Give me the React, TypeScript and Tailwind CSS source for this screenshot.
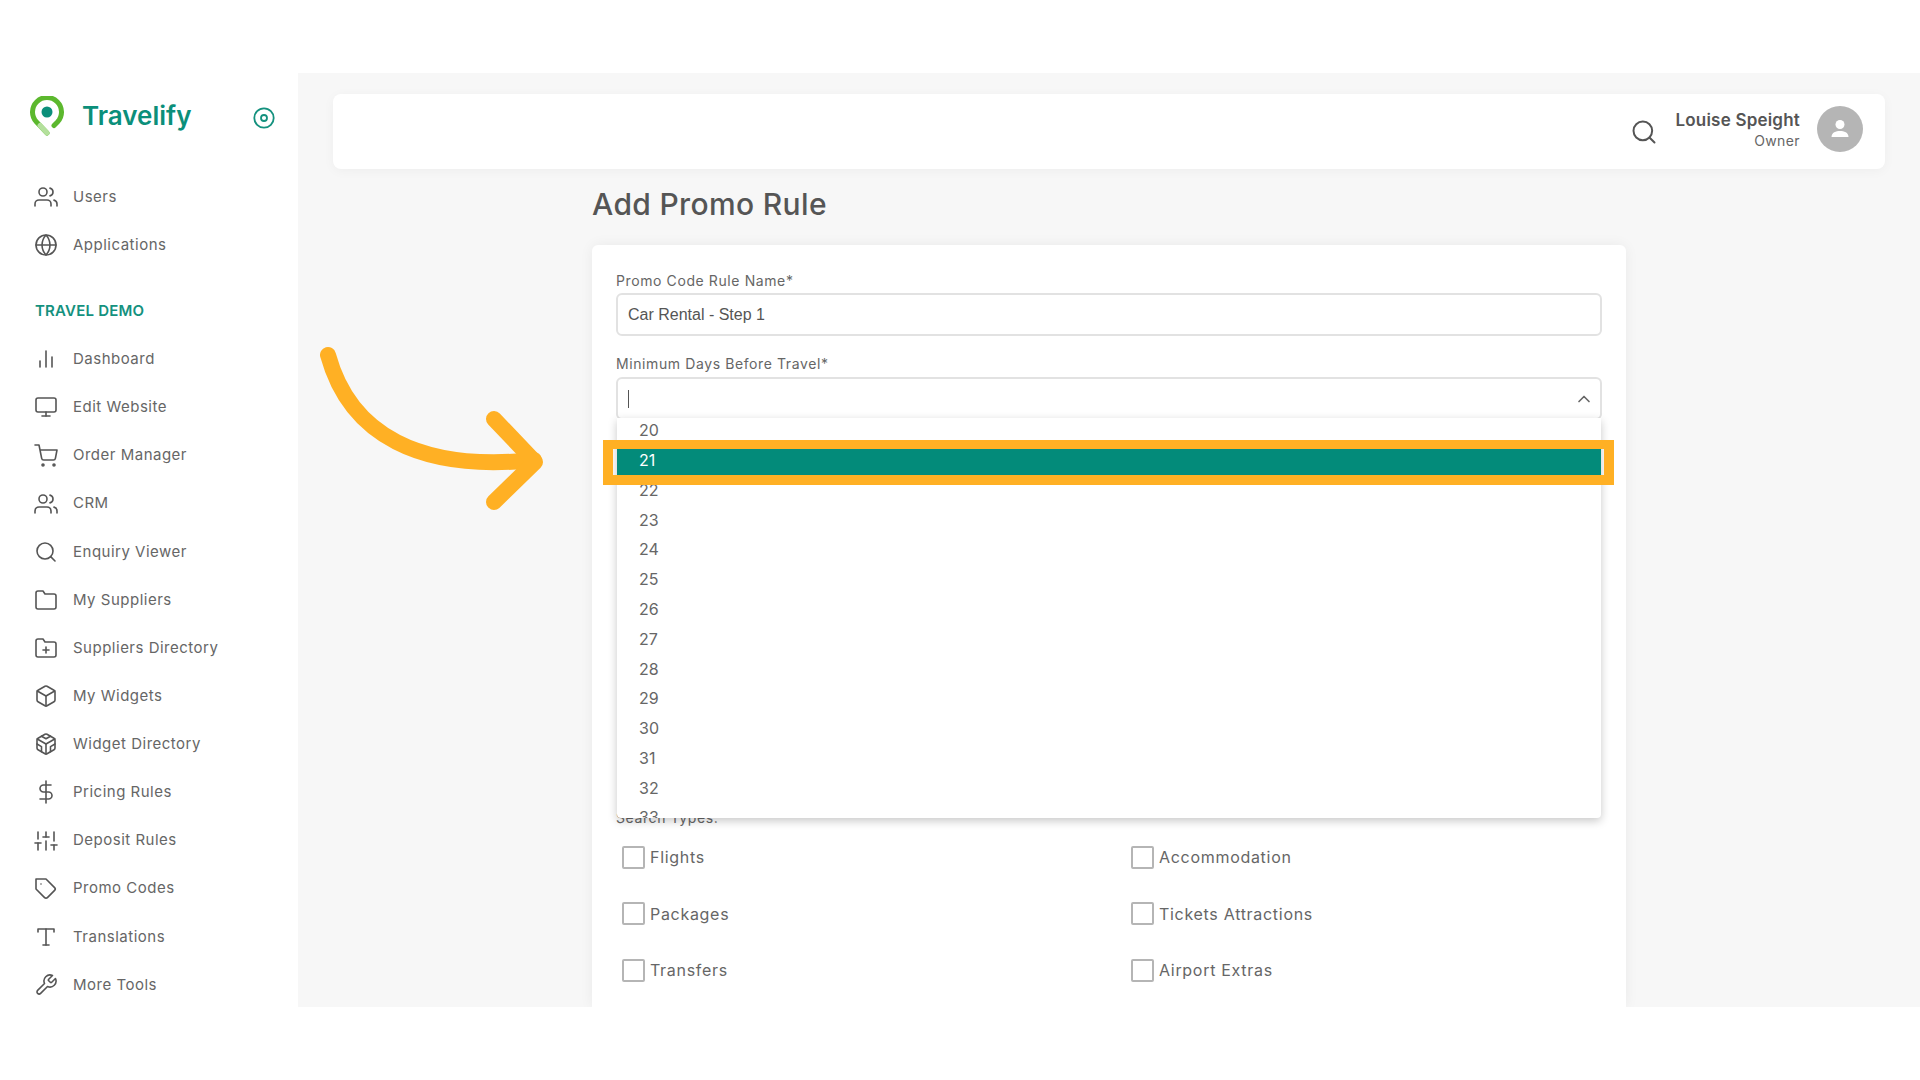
import { FiUsers, FiGlobe, FiBarChart2, FiMonitor, FiShoppingCart, FiSearch, FiFolder, FiFolderPlus, FiBox, FiCodesandbox, FiDollarSign, FiSliders, FiTag, FiType, FiTool, FiChevronUp } from "react-icons/fi";
import type { IconType } from "react-icons";

const FONT = { fontFamily: "Inter, 'Noto Sans', sans-serif" };

const TOP_ITEMS: [IconType, string][] = [
  [FiUsers, "Users"],
  [FiGlobe, "Applications"],
];

const DEMO_ITEMS: [IconType, string][] = [
  [FiBarChart2, "Dashboard"],
  [FiMonitor, "Edit Website"],
  [FiShoppingCart, "Order Manager"],
  [FiUsers, "CRM"],
  [FiSearch, "Enquiry Viewer"],
  [FiFolder, "My Suppliers"],
  [FiFolderPlus, "Suppliers Directory"],
  [FiBox, "My Widgets"],
  [FiCodesandbox, "Widget Directory"],
  [FiDollarSign, "Pricing Rules"],
  [FiSliders, "Deposit Rules"],
  [FiTag, "Promo Codes"],
  [FiType, "Translations"],
  [FiTool, "More Tools"],
];

const OPTIONS = [20, 21, 22, 23, 24, 25, 26, 27, 28, 29, 30, 31, 32, 33];

const SEARCH_TYPES = ["Flights", "Accommodation", "Packages", "Tickets Attractions", "Transfers", "Airport Extras"];

function NavItem({ icon: Icon, label }: { icon: IconType; label: string }) {
  return (
    <div className="flex h-[48.13px] items-center pl-[34px]">
      <Icon className="h-6 w-6 shrink-0 text-[#555]" strokeWidth={1.6} />
      <span className="ml-[15px] text-[15px] tracking-[0.5px] text-[#666]">{label}</span>
    </div>
  );
}

function Logo() {
  return (
    <svg width="34" height="40" viewBox="0 0 34 40" fill="none">
      <path d="M17 37 L6.5 26 A14.5 14.5 0 1 1 27.5 26 L24 29.5" stroke="#5cb82e" strokeWidth="5" strokeLinecap="round" strokeLinejoin="round" />
      <path d="M17 37 L10 29.5" stroke="#b4e09c" strokeWidth="5" strokeLinecap="round" />
      <circle cx="17" cy="16" r="5.5" fill="#0b8f7a" />
    </svg>
  );
}

function Sidebar() {
  return (
    <aside className="w-[298px] shrink-0 bg-white">
      <div className="flex h-[100px] items-start pl-[30px] pr-[23px] pt-[23px]">
        <Logo />
        <span className="ml-[18px] mt-[3px] text-[26px] leading-[34px] font-semibold text-[#0b8f7a]">Travelify</span>
        <svg className="ml-auto mt-[11px]" width="22" height="22" viewBox="0 0 22 22" fill="none">
          <circle cx="11" cy="11" r="9.7" stroke="#14917e" strokeWidth="1.8" />
          <circle cx="11" cy="11" r="3" stroke="#14917e" strokeWidth="1.8" />
        </svg>
      </div>
      {TOP_ITEMS.map(([icon, label]) => (
        <NavItem key={label} icon={icon} label={label} />
      ))}
      <div className="flex h-[66px] items-center pl-[35px] pt-[18px] text-[15px] tracking-[0.2px] font-semibold text-[#14917e]">TRAVEL DEMO</div>
      {DEMO_ITEMS.map(([icon, label]) => (
        <NavItem key={label} icon={icon} label={label} />
      ))}
    </aside>
  );
}

function Header() {
  return (
    <header className="mx-[35px] mt-[21px] flex h-[75px] items-center justify-end rounded-lg bg-white pb-[5px] pr-[22px] shadow-[0_2px_12px_rgba(0,0,0,0.04)]">
      <FiSearch className="mt-[5px] h-7 w-7 text-[#555]" strokeWidth={1.7} />
      <div className="ml-[17px] flex flex-col items-end">
        <span className="text-[17px] leading-[24px] tracking-[0.2px] font-semibold text-[#555]">Louise Speight</span>
        <span className="text-[14px] leading-[18px] tracking-[0.4px] text-[#666]">Owner</span>
      </div>
      <div className="ml-[17px] flex h-[46px] w-[46px] items-center justify-center rounded-full bg-[#b5b5b5]">
        <svg width="22" height="22" viewBox="0 0 22 22" fill="white">
          <circle cx="11" cy="6.5" r="4.5" />
          <path d="M2.5 19 C2.5 14.5 7 13 11 13 C15 13 19.5 14.5 19.5 19 Z" />
        </svg>
      </div>
    </header>
  );
}

function Checkbox({ label }: { label: string }) {
  return (
    <div className="flex h-[22px] items-center">
      <span className="h-[23px] w-[23px] rounded-[2px] border-2 border-[#b5b5b5] bg-white" />
      <span className="ml-[5px] text-[16px] tracking-[0.7px] text-[#666]">{label}</span>
    </div>
  );
}

function Form() {
  return (
    <div className="mt-[23px] flex-1 rounded-t-md bg-white px-6 pt-[27px] shadow-[0_0_14px_rgba(0,0,0,0.06)]">
      <label className="block text-[14px] leading-[18px] tracking-[0.6px] text-[#666]">Promo Code Rule Name*</label>
      <div className="mt-[3px] flex h-[43px] items-center rounded-md border-2 border-[#e2e2e2] px-[10px] text-[16px] font-medium text-[#555]" style={{ fontFamily: "'Liberation Sans', sans-serif" }}>
        Car Rental - Step 1
      </div>
      <label className="mt-[19px] block text-[14px] leading-[18px] tracking-[0.6px] text-[#666]">Minimum Days Before Travel*</label>
      <div className="relative mt-[4px]">
        <div className="flex h-[43px] items-center justify-between rounded-md border-2 border-[#e2e2e2] pl-[10px] pr-[6px]">
          <span className="h-[18px] w-px bg-[#555]" />
          <FiChevronUp className="h-5 w-5 text-[#666]" />
        </div>
        <div className="absolute left-px right-[1px] top-[41px] z-10 h-[400px] overflow-hidden rounded-b bg-white shadow-[0_3px_10px_rgba(0,0,0,0.22)]">
          <div className="-mt-[2.5px]">
            {OPTIONS.map((n) => (
              <div key={n} className={`flex h-[29.77px] items-center pl-[22px] text-[16px] ${n === 21 ? "bg-[#038b7a] text-white" : "text-[#666]"}`}>
                {n}
              </div>
            ))}
          </div>
        </div>
        {/* highlight box from the tutorial overlay */}
        <div className="absolute -left-[13px] top-[63px] z-20 h-[45px] w-[1011px] border-x-[10px] border-b-[10px] border-t-[9px] border-[#ffb024]" />
      </div>
      <label className="mt-[389px] block text-[14px] leading-[18px] tracking-[0.6px] text-[#666]">Search Types:</label>
      <div className="mt-[19px] grid grid-cols-[509px_1fr] gap-y-[34.5px] pl-[6px]">
        {SEARCH_TYPES.map((t) => (
          <Checkbox key={t} label={t} />
        ))}
      </div>
    </div>
  );
}

export default function App() {
  return (
    <div className="flex h-screen flex-col overflow-hidden bg-white" style={FONT}>
      <div className="h-[73px] shrink-0" />
      <div className="flex min-h-0 flex-1">
        <Sidebar />
        <main className="relative flex min-w-0 flex-1 flex-col overflow-hidden bg-[#f7f7f7]">
          <Header />
          <div className="mx-auto flex min-h-0 w-[1034px] flex-1 flex-col">
            <h1 className="mt-[17px] text-[30px] leading-[36px] tracking-[0.35px] font-medium text-[#555]">Add Promo Rule</h1>
            <Form />
          </div>
          {/* curved arrow pointing at the option */}
          <svg className="absolute left-[22px] top-[272px] z-30" width="240" height="180" viewBox="320 345 240 180" fill="none">
            <path d="M328 355 C350 435 420 472 534 460" stroke="#ffb024" strokeWidth="16" strokeLinecap="round" />
            <path d="M494 419 L535 462 L494 502" stroke="#ffb024" strokeWidth="16" strokeLinecap="round" strokeLinejoin="round" />
          </svg>
        </main>
      </div>
      <div className="h-[73px] shrink-0" />
    </div>
  );
}
